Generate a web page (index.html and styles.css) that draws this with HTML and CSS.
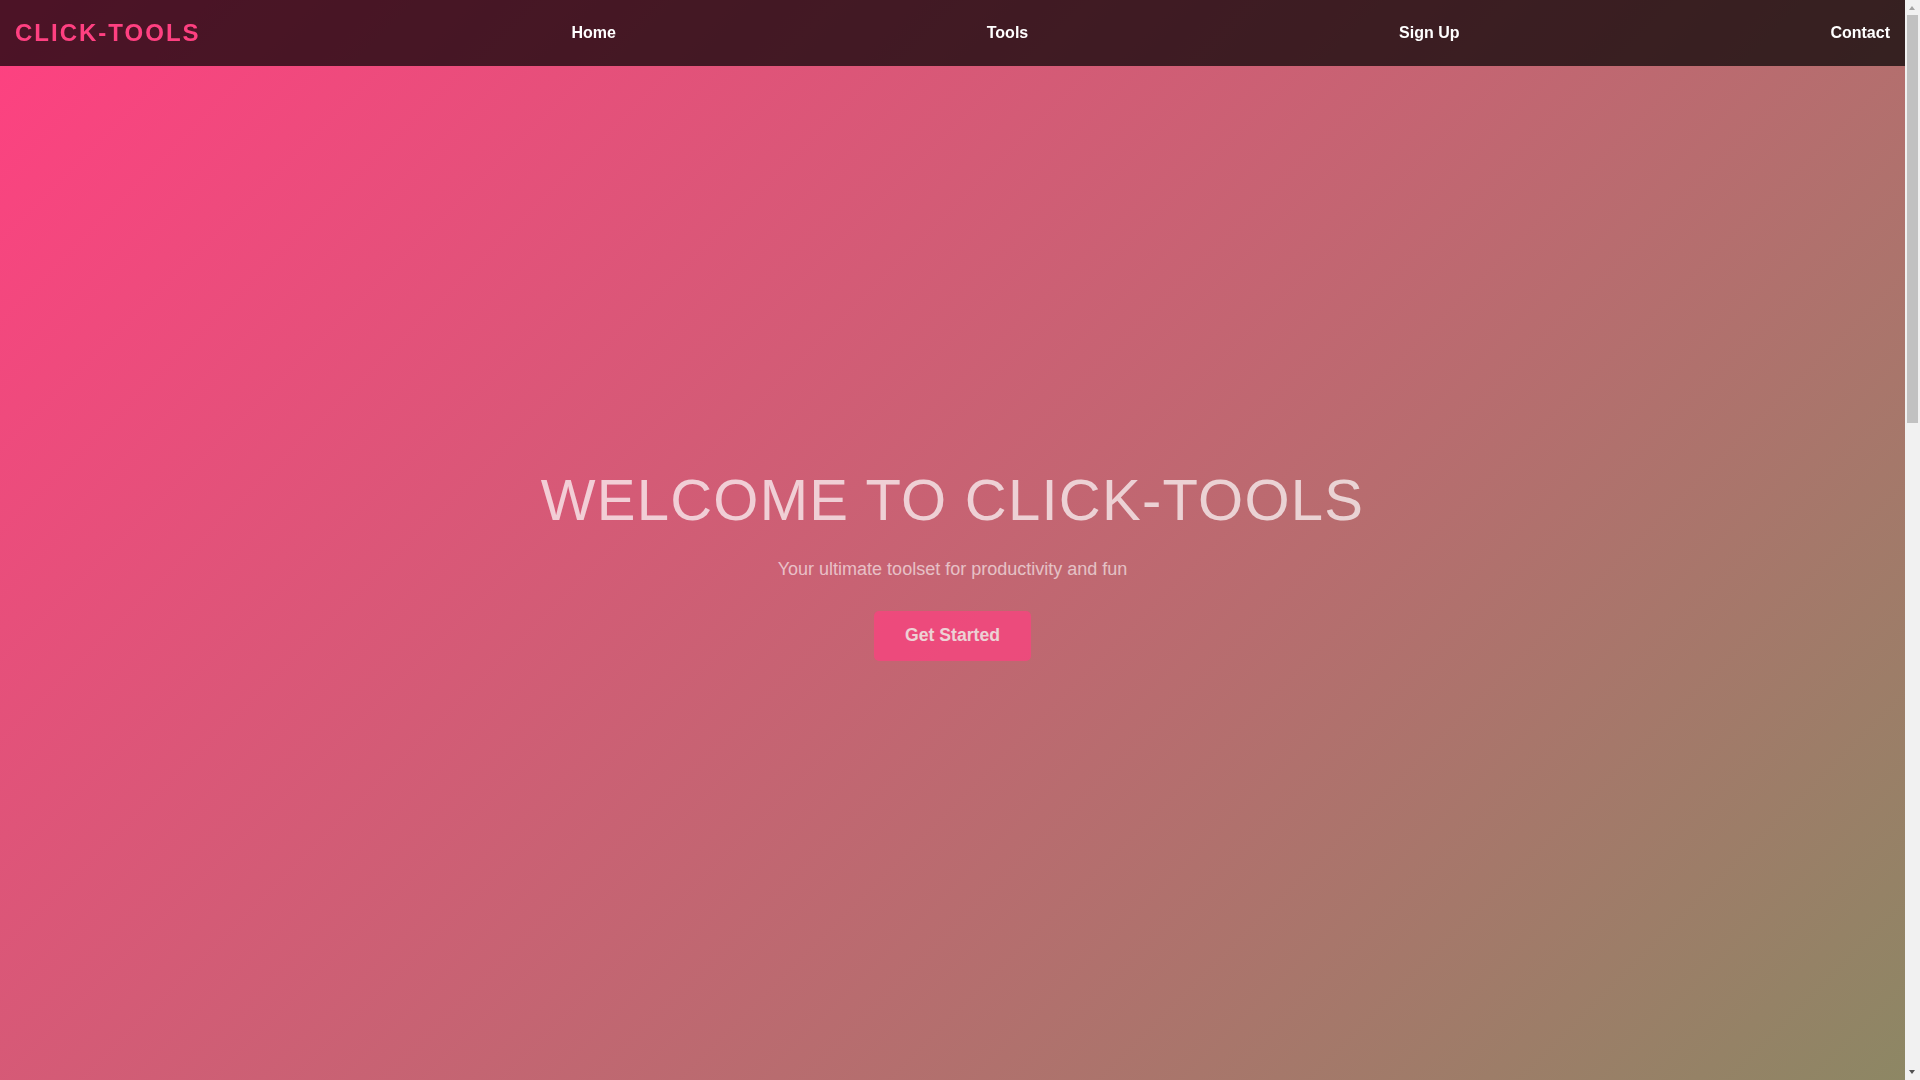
FILE: index.html
```html
<!DOCTYPE html>
<html lang="en">
<head>
<meta charset="UTF-8">
<title>Click-Tools</title>
<link rel="stylesheet" href="styles.css">
</head>
<body>
<nav class="navbar">
  <a class="logo" href="#">CLICK-TOOLS</a>
  <a class="nav-link" href="#">Home</a>
  <a class="nav-link" href="#">Tools</a>
  <a class="nav-link" href="#">Sign Up</a>
  <a class="nav-link" href="#">Contact</a>
</nav>
<main>
  <section class="hero">
    <div class="hero-content">
      <h1 class="hero-title">WELCOME TO CLICK-TOOLS</h1>
      <p class="hero-subtitle">Your ultimate toolset for productivity and fun</p>
      <a class="cta" href="#">Get Started</a>
    </div>
  </section>
</main>
<div class="scrollbar" aria-hidden="true">
  <span class="scroll-arrow scroll-arrow-up"></span>
  <span class="scroll-thumb"></span>
  <span class="scroll-arrow scroll-arrow-down"></span>
</div>
</body>
</html>
```
FILE: styles.css
```css
* {
  box-sizing: border-box;
}

html, body {
  margin: 0;
  padding: 0;
}

body {
  margin-right: 15px;
  font-family: "Liberation Sans", Arial, sans-serif;
  color: #ffffff;
  background: #f1f1f1;
  overflow: hidden;
}

.navbar {
  position: fixed;
  top: 0;
  left: 0;
  right: 15px;
  z-index: 10;
  display: flex;
  justify-content: space-between;
  align-items: center;
  padding: 19.2px 15px;
  background: rgba(0, 0, 0, 0.7);
}

.logo {
  font-size: 24px;
  font-weight: 700;
  letter-spacing: 2px;
  color: #ff4081;
  text-decoration: none;
  line-height: normal;
}

.nav-link {
  font-size: 16px;
  font-weight: 700;
  color: #ffffff;
  text-decoration: none;
}

.hero {
  height: 100vh;
  display: flex;
  flex-direction: column;
  justify-content: center;
  align-items: center;
  padding-top: 47px;
  background: linear-gradient(135deg, #ff4081 0%, #8d8764 100%);
  text-align: center;
}

.hero-content {
  display: flex;
  flex-direction: column;
  align-items: center;
  opacity: 0.7;
}

.hero-title {
  margin: 0 0 25.8px;
  font-size: 58px;
  font-weight: 400;
  letter-spacing: 1.25px;
  line-height: normal;
  color: #ffffff;
}

.hero-subtitle {
  margin: 0 0 31.2px;
  font-size: 18px;
  line-height: normal;
  opacity: 0.85;
}

.cta {
  display: inline-block;
  padding: 14.4px 31px;
  font-size: 17.6px;
  font-weight: 700;
  line-height: normal;
  color: #ffffff;
  background: #ff4081;
  border-radius: 5px;
  text-decoration: none;
}

/* static rendering of the browser's scrollbar */
.scrollbar {
  position: fixed;
  top: 0;
  right: 0;
  width: 15px;
  height: 100vh;
  background: #f1f1f1;
  z-index: 20;
}

.scroll-thumb {
  position: absolute;
  top: 15px;
  left: 2px;
  width: 11px;
  height: 408px;
  background: #c1c1c1;
}

.scroll-arrow {
  position: absolute;
  left: 4px;
  width: 0;
  height: 0;
  border-left: 3.5px solid transparent;
  border-right: 3.5px solid transparent;
}

.scroll-arrow-up {
  top: 6px;
  border-bottom: 4px solid #a3a3a3;
}

.scroll-arrow-down {
  bottom: 6px;
  border-top: 4px solid #505050;
}
```
